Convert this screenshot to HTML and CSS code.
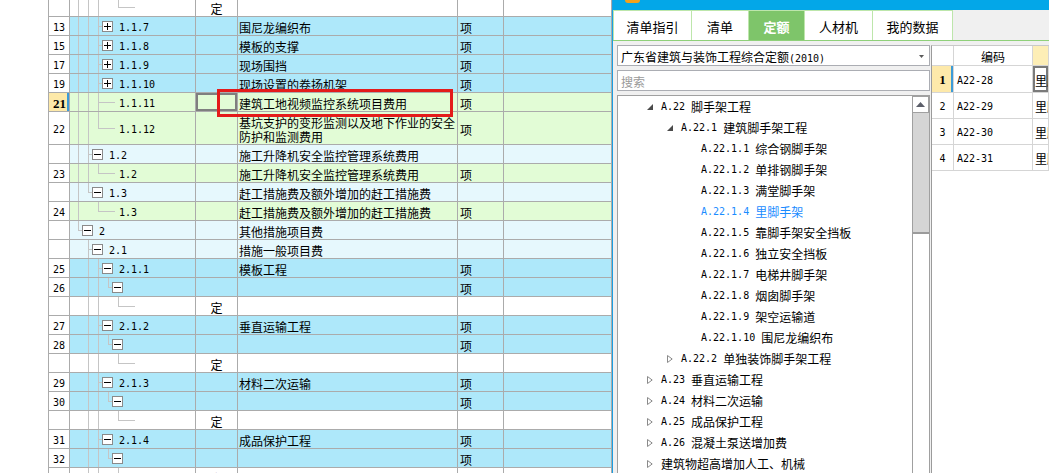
FILE: index.html
```html
<!DOCTYPE html>
<html lang="zh-CN">
<head>
    <meta charset="UTF-8">
    <title>措施项目 - 定额</title>
    <link rel="stylesheet" href="styles.css">
</head>
<body>
    <div class="sheet">
        <div class="row">
            <div class="lead"></div><div class="num"></div>
            <div class="tree"><i class="g v"></i><i class="g v"></i><i class="g v"></i><i class="g e"></i><i class="g l"></i><i class="g h"></i></div>
            <div class="kind">定</div><div class="name"></div><div class="unit"></div><div class="more"></div>
        </div>
        <div class="row blue">
            <div class="lead"></div><div class="num">13</div>
            <div class="tree"><i class="g v"></i><i class="g v"></i><i class="g t"></i><b class="box plus"></b><span class="code">1.1.7</span></div>
            <div class="kind"></div><div class="name">围尼龙编织布</div><div class="unit">项</div><div class="more"></div>
        </div>
        <div class="row blue">
            <div class="lead"></div><div class="num">15</div>
            <div class="tree"><i class="g v"></i><i class="g v"></i><i class="g t"></i><b class="box plus"></b><span class="code">1.1.8</span></div>
            <div class="kind"></div><div class="name">模板的支撑</div><div class="unit">项</div><div class="more"></div>
        </div>
        <div class="row blue">
            <div class="lead"></div><div class="num">17</div>
            <div class="tree"><i class="g v"></i><i class="g v"></i><i class="g t"></i><b class="box plus"></b><span class="code">1.1.9</span></div>
            <div class="kind"></div><div class="name">现场围挡</div><div class="unit">项</div><div class="more"></div>
        </div>
        <div class="row blue">
            <div class="lead"></div><div class="num">19</div>
            <div class="tree"><i class="g v"></i><i class="g v"></i><i class="g t"></i><b class="box plus"></b><span class="code">1.1.10</span></div>
            <div class="kind"></div><div class="name">现场设置的卷扬机架</div><div class="unit">项</div><div class="more"></div>
        </div>
        <div class="row green">
            <div class="lead"></div><div class="num sel">21</div>
            <div class="tree"><i class="g v"></i><i class="g v"></i><i class="g t"></i><i class="g h"></i><span class="code">1.1.11</span></div>
            <div class="kind focus"></div><div class="name">建筑工地视频监控系统项目费用</div><div class="unit">项</div><div class="more"></div>
        </div>
        <div class="row green tall">
            <div class="lead"></div><div class="num">22</div>
            <div class="tree"><i class="g v"></i><i class="g v"></i><i class="g l"></i><i class="g h"></i><span class="code">1.1.12</span></div>
            <div class="kind"></div><div class="name">基坑支护的变形监测以及地下作业的安全防护和监测费用</div><div class="unit">项</div><div class="more"></div>
        </div>
        <div class="row light">
            <div class="lead"></div><div class="num"></div>
            <div class="tree"><i class="g v"></i><i class="g t"></i><b class="box"></b><span class="code">1.2</span></div>
            <div class="kind"></div><div class="name">施工升降机安全监控管理系统费用</div><div class="unit"></div><div class="more"></div>
        </div>
        <div class="row green">
            <div class="lead"></div><div class="num">23</div>
            <div class="tree"><i class="g v"></i><i class="g v"></i><i class="g l"></i><i class="g h"></i><span class="code">1.2</span></div>
            <div class="kind"></div><div class="name">施工升降机安全监控管理系统费用</div><div class="unit">项</div><div class="more"></div>
        </div>
        <div class="row light">
            <div class="lead"></div><div class="num"></div>
            <div class="tree"><i class="g v"></i><i class="g l"></i><b class="box"></b><span class="code">1.3</span></div>
            <div class="kind"></div><div class="name">赶工措施费及额外增加的赶工措施费</div><div class="unit"></div><div class="more"></div>
        </div>
        <div class="row green">
            <div class="lead"></div><div class="num">24</div>
            <div class="tree"><i class="g v"></i><i class="g e"></i><i class="g l"></i><i class="g h"></i><span class="code">1.3</span></div>
            <div class="kind"></div><div class="name">赶工措施费及额外增加的赶工措施费</div><div class="unit">项</div><div class="more"></div>
        </div>
        <div class="row light">
            <div class="lead"></div><div class="num"></div>
            <div class="tree"><i class="g l"></i><b class="box"></b><span class="code">2</span></div>
            <div class="kind"></div><div class="name">其他措施项目费</div><div class="unit"></div><div class="more"></div>
        </div>
        <div class="row light">
            <div class="lead"></div><div class="num"></div>
            <div class="tree"><i class="g e"></i><i class="g t"></i><b class="box"></b><span class="code">2.1</span></div>
            <div class="kind"></div><div class="name">措施一般项目费</div><div class="unit"></div><div class="more"></div>
        </div>
        <div class="row blue">
            <div class="lead"></div><div class="num">25</div>
            <div class="tree"><i class="g e"></i><i class="g v"></i><i class="g t"></i><b class="box"></b><span class="code">2.1.1</span></div>
            <div class="kind"></div><div class="name">模板工程</div><div class="unit">项</div><div class="more"></div>
        </div>
        <div class="row blue">
            <div class="lead"></div><div class="num">26</div>
            <div class="tree"><i class="g e"></i><i class="g v"></i><i class="g v"></i><i class="g l"></i><b class="box"></b></div>
            <div class="kind"></div><div class="name"></div><div class="unit">项</div><div class="more"></div>
        </div>
        <div class="row">
            <div class="lead"></div><div class="num"></div>
            <div class="tree"><i class="g e"></i><i class="g v"></i><i class="g v"></i><i class="g e"></i><i class="g l"></i><i class="g h"></i></div>
            <div class="kind">定</div><div class="name"></div><div class="unit"></div><div class="more"></div>
        </div>
        <div class="row blue">
            <div class="lead"></div><div class="num">27</div>
            <div class="tree"><i class="g e"></i><i class="g v"></i><i class="g t"></i><b class="box"></b><span class="code">2.1.2</span></div>
            <div class="kind"></div><div class="name">垂直运输工程</div><div class="unit">项</div><div class="more"></div>
        </div>
        <div class="row blue">
            <div class="lead"></div><div class="num">28</div>
            <div class="tree"><i class="g e"></i><i class="g v"></i><i class="g v"></i><i class="g l"></i><b class="box"></b></div>
            <div class="kind"></div><div class="name"></div><div class="unit">项</div><div class="more"></div>
        </div>
        <div class="row">
            <div class="lead"></div><div class="num"></div>
            <div class="tree"><i class="g e"></i><i class="g v"></i><i class="g v"></i><i class="g e"></i><i class="g l"></i><i class="g h"></i></div>
            <div class="kind">定</div><div class="name"></div><div class="unit"></div><div class="more"></div>
        </div>
        <div class="row blue">
            <div class="lead"></div><div class="num">29</div>
            <div class="tree"><i class="g e"></i><i class="g v"></i><i class="g t"></i><b class="box"></b><span class="code">2.1.3</span></div>
            <div class="kind"></div><div class="name">材料二次运输</div><div class="unit">项</div><div class="more"></div>
        </div>
        <div class="row blue">
            <div class="lead"></div><div class="num">30</div>
            <div class="tree"><i class="g e"></i><i class="g v"></i><i class="g v"></i><i class="g l"></i><b class="box"></b></div>
            <div class="kind"></div><div class="name"></div><div class="unit">项</div><div class="more"></div>
        </div>
        <div class="row">
            <div class="lead"></div><div class="num"></div>
            <div class="tree"><i class="g e"></i><i class="g v"></i><i class="g v"></i><i class="g e"></i><i class="g l"></i><i class="g h"></i></div>
            <div class="kind">定</div><div class="name"></div><div class="unit"></div><div class="more"></div>
        </div>
        <div class="row blue">
            <div class="lead"></div><div class="num">31</div>
            <div class="tree"><i class="g e"></i><i class="g v"></i><i class="g t"></i><b class="box"></b><span class="code">2.1.4</span></div>
            <div class="kind"></div><div class="name">成品保护工程</div><div class="unit">项</div><div class="more"></div>
        </div>
        <div class="row blue">
            <div class="lead"></div><div class="num">32</div>
            <div class="tree"><i class="g e"></i><i class="g v"></i><i class="g v"></i><i class="g l"></i><b class="box"></b></div>
            <div class="kind"></div><div class="name"></div><div class="unit">项</div><div class="more"></div>
        </div>
        <div class="row">
            <div class="lead"></div><div class="num"></div>
            <div class="tree"><i class="g e"></i><i class="g v"></i><i class="g v"></i><i class="g e"></i><i class="g l"></i><i class="g h"></i></div>
            <div class="kind">定</div><div class="name"></div><div class="unit"></div><div class="more"></div>
        </div>

        <div class="mark"></div>
    </div>

    <div class="side">
        <div class="titlebar"><span class="logo"></span></div>
        <div class="tabs">
            <div class="tab">清单指引</div>
            <div class="tab">清单</div>
            <div class="tab on">定额</div>
            <div class="tab">人材机</div>
            <div class="tab">我的数据</div>
        </div>
        <div class="panes">
            <div class="finder">
                <div class="select">
                    <span>广东省建筑与装饰工程综合定额<span class="code">(2010)</span></span>
                    <svg width="5" height="3" viewBox="0 0 5 3"><polygon points="0,0 5,0 2.5,3" fill="#5a5a5a"/></svg>
                </div>
                <div class="search">搜索</div>
                <div class="treebox">
                    <div class="list">
                        <div class="item lv0"><span class="ico"><svg width="6" height="6" viewBox="0 0 6 6"><polygon points="6,0 6,6 0,6" fill="#4b4b4b"/></svg></span><span class="code">A.22</span>脚手架工程</div>
                        <div class="item lv1"><span class="ico"><svg width="6" height="6" viewBox="0 0 6 6"><polygon points="6,0 6,6 0,6" fill="#4b4b4b"/></svg></span><span class="code">A.22.1</span>建筑脚手架工程</div>
                        <div class="item lv2"><span class="code">A.22.1.1</span>综合钢脚手架</div>
                        <div class="item lv2"><span class="code">A.22.1.2</span>单排钢脚手架</div>
                        <div class="item lv2"><span class="code">A.22.1.3</span>满堂脚手架</div>
                        <div class="item lv2 cur"><span class="code">A.22.1.4</span>里脚手架</div>
                        <div class="item lv2"><span class="code">A.22.1.5</span>靠脚手架安全挡板</div>
                        <div class="item lv2"><span class="code">A.22.1.6</span>独立安全挡板</div>
                        <div class="item lv2"><span class="code">A.22.1.7</span>电梯井脚手架</div>
                        <div class="item lv2"><span class="code">A.22.1.8</span>烟囱脚手架</div>
                        <div class="item lv2"><span class="code">A.22.1.9</span>架空运输道</div>
                        <div class="item lv2"><span class="code">A.22.1.10</span>围尼龙编织布</div>
                        <div class="item lv1"><span class="ico"><svg width="6" height="8" viewBox="0 0 6 8"><polygon points="0.5,0.5 5.2,4 0.5,7.5" fill="none" stroke="#8a8a8a"/></svg></span><span class="code">A.22.2</span>单独装饰脚手架工程</div>
                        <div class="item lv0"><span class="ico"><svg width="6" height="8" viewBox="0 0 6 8"><polygon points="0.5,0.5 5.2,4 0.5,7.5" fill="none" stroke="#8a8a8a"/></svg></span><span class="code">A.23</span>垂直运输工程</div>
                        <div class="item lv0"><span class="ico"><svg width="6" height="8" viewBox="0 0 6 8"><polygon points="0.5,0.5 5.2,4 0.5,7.5" fill="none" stroke="#8a8a8a"/></svg></span><span class="code">A.24</span>材料二次运输</div>
                        <div class="item lv0"><span class="ico"><svg width="6" height="8" viewBox="0 0 6 8"><polygon points="0.5,0.5 5.2,4 0.5,7.5" fill="none" stroke="#8a8a8a"/></svg></span><span class="code">A.25</span>成品保护工程</div>
                        <div class="item lv0"><span class="ico"><svg width="6" height="8" viewBox="0 0 6 8"><polygon points="0.5,0.5 5.2,4 0.5,7.5" fill="none" stroke="#8a8a8a"/></svg></span><span class="code">A.26</span>混凝土泵送增加费</div>
                        <div class="item lv0"><span class="ico"><svg width="6" height="8" viewBox="0 0 6 8"><polygon points="0.5,0.5 5.2,4 0.5,7.5" fill="none" stroke="#8a8a8a"/></svg></span>建筑物超高增加人工、机械</div>
                    </div>
                    <div class="scroll">
                        <div class="up"><svg width="9" height="5" viewBox="0 0 9 5"><polygon points="0,5 9,5 4.5,0" fill="#5c5f6a"/></svg></div>
                        <div class="thumb"></div>
                    </div>
                </div>
            </div>
            <div class="table">
                <div class="trow head"><div class="tn"></div><div class="tc">编码</div><div class="tx hl"></div></div>
                <div class="trow first"><div class="tn sel">1</div><div class="tc code">A22-28</div><div class="tx focus">里脚手架</div></div>
                <div class="trow"><div class="tn code">2</div><div class="tc code">A22-29</div><div class="tx">里脚手架</div></div>
                <div class="trow"><div class="tn code">3</div><div class="tc code">A22-30</div><div class="tx">里脚手架</div></div>
                <div class="trow"><div class="tn code">4</div><div class="tc code">A22-31</div><div class="tx">里脚手架</div></div>
            </div>
        </div>
    </div>
</body>
</html>
```

FILE: styles.css
```css
* {
    margin: 0;
    padding: 0;
    box-sizing: border-box;
}

html, body {
    width: 100%;
    height: 100%;
}

body {
    font-family: "Noto Sans CJK SC", sans-serif;
    font-size: 12px;
    color: #000;
    background: #fff;
    display: flex;
    overflow: hidden;
}

.code {
    font-family: "DejaVu Sans Mono", monospace;
    font-size: 10px;
}

/* left sheet */
.sheet {
    width: 612px;
    flex: none;
    position: relative;
    margin-top: -2px;
}

.row {
    display: grid;
    grid-template-columns: 49px 21px 126px 42px 220px 46px 108px;
    height: 19px;
}

.row.tall {
    height: 33px;
}

.row > div {
    display: flex;
    align-items: center;
    padding-top: 4px;
    line-height: 14px;
    white-space: nowrap;
    overflow: hidden;
    border-right: 1px solid #ababab;
    border-bottom: 1px solid #ababab;
}

.row > .lead {
    border-bottom: none;
}

.num {
    padding-left: 4px;
    font-family: "DejaVu Sans Mono", monospace;
    font-size: 10px;
}

.num.sel {
    background: #fde9a9;
    font-family: "Liberation Serif", serif;
    font-size: 13px;
    font-weight: bold;
    box-shadow: inset -2px 0 #3d9bd8;
}

.kind {
    justify-content: center;
}

.kind.focus {
    box-shadow: inset 0 0 0 2px #7f7f7f;
}

.name {
    padding-left: 1px;
}

.row.tall .name {
    white-space: normal;
}

.unit {
    padding-left: 2px;
}

.blue > :nth-child(n+3) {
    background-color: #aee8fa;
}

.green > :nth-child(n+3) {
    background-color: #e2fcd6;
}

.light > :nth-child(n+3) {
    background-color: #e6f8fd;
}

.row > .tree {
    padding: 0 0 0 3px;
    align-items: stretch;
}

.tree .code {
    align-self: center;
    padding-top: 4px;
    margin-left: 6px;
}

.tree .h + .code {
    margin-left: 4px;
}

.g {
    flex: none;
    width: 10px;
    background-repeat: no-repeat;
}

.g.v {
    background-image: linear-gradient(#c5c5c5, #c5c5c5);
    background-size: 1px 100%;
    background-position: 5px 0;
}

.g.t {
    background-image: linear-gradient(#c5c5c5, #c5c5c5), linear-gradient(#c5c5c5, #c5c5c5);
    background-size: 1px 100%, 5px 1px;
    background-position: 5px 0, 5px 50%;
}

.g.l {
    background-image: linear-gradient(#c5c5c5, #c5c5c5), linear-gradient(#c5c5c5, #c5c5c5);
    background-size: 1px 50%, 5px 1px;
    background-position: 5px 0, 5px 50%;
}

.g.h {
    width: 12px;
    background-image: linear-gradient(#c5c5c5, #c5c5c5);
    background-size: 100% 1px;
    background-position: 0 50%;
}

.box {
    flex: none;
    align-self: center;
    width: 11px;
    height: 11px;
    margin-left: -1px;
    border: 1px solid #8a8a8a;
    background: linear-gradient(#000, #000) center / 7px 1px no-repeat #fff;
}

.box.plus {
    background-image: linear-gradient(#000, #000), linear-gradient(#000, #000);
    background-size: 7px 1px, 1px 7px;
}

.mark {
    position: absolute;
    left: 217px;
    top: 91px;
    width: 236px;
    height: 28px;
    border: 3px solid #e41b1b;
}

/* right side panel */
.side {
    flex: 1;
    min-width: 0;
    display: flex;
    flex-direction: column;
    border-left: 1px solid #1b9ee2;
    background: #f0f0f0;
}

.titlebar {
    flex: none;
    height: 10px;
    background: #03a7e8;
}

.logo {
    display: block;
    width: 15px;
    height: 3px;
    margin-left: 12px;
    border-radius: 0 0 4px 4px;
    background: #f4a11c;
}

.tabs {
    flex: none;
    display: flex;
    height: 31px;
    border-bottom: 1px solid #8fd07a;
}

.tab {
    display: flex;
    align-items: center;
    justify-content: center;
    padding-top: 2px;
    font-size: 13px;
    background: #fff;
    border-top: 1px solid #bde6ab;
    border-right: 1px solid #bde6ab;
}

.tab:nth-child(1) { width: 79px; border-left: 1px solid #bde6ab; }
.tab:nth-child(2) { width: 57px; }
.tab:nth-child(3) { width: 56px; }
.tab:nth-child(4) { width: 68px; }
.tab:nth-child(5) { width: 80px; }

.tab.on {
    background: #7ec56a;
    color: #fff;
    font-weight: bold;
}

.panes {
    flex: 1;
    min-height: 0;
    display: flex;
}

.finder {
    flex: none;
    width: 317px;
    display: flex;
    flex-direction: column;
    gap: 4px;
    padding: 4px 0 0 4px;
}

.select, .search {
    flex: none;
    height: 21px;
    display: flex;
    align-items: center;
    padding: 1px 0 0 3px;
    background: #fff;
    border: 1px solid #abadb3;
    white-space: nowrap;
}

.select {
    justify-content: space-between;
    padding-right: 5px;
}

.search {
    color: #9a9a9a;
}

.treebox {
    flex: 1;
    min-height: 0;
    display: flex;
    background: #fff;
    border: 1px solid #a0a0a0;
    border-bottom: none;
}

.list {
    flex: 1;
    overflow: hidden;
}

.item {
    height: 21px;
    display: flex;
    align-items: center;
    white-space: nowrap;
}

.item .code {
    margin-right: 6px;
}

.item.cur {
    color: #1a8cff;
}

.lv0 { padding-left: 29px; }
.lv1 { padding-left: 49px; }
.lv2 { padding-left: 83px; }

.ico {
    flex: none;
    width: 14px;
    display: flex;
    align-items: center;
}

.scroll {
    flex: none;
    width: 17px;
    display: flex;
    flex-direction: column;
    border-left: 1px solid #a0a0a0;
}

.up {
    height: 17px;
    display: flex;
    align-items: center;
    justify-content: center;
    border: 1px solid #a0a0a0;
    border-left: none;
    background: #fff;
}

.thumb {
    height: 121px;
    background: #d5d5d5;
    border-bottom: 2px solid #9b9b9b;
}

.table {
    flex: 1;
    min-width: 0;
    margin: 4px 0 0 1px;
    overflow: hidden;
    background: #fff;
    border-left: 1px solid #9b9b9b;
    border-top: 1px solid #c9c9c9;
}

.trow {
    display: grid;
    grid-template-columns: 22px 79px 1fr;
    height: 26px;
}

.trow.head {
    height: 20px;
}

.trow.first {
    height: 27px;
}

.trow > div {
    display: flex;
    align-items: center;
    padding-top: 2px;
    white-space: nowrap;
    overflow: hidden;
    border-right: 1px solid #d5d5d5;
    border-bottom: 1px solid #d5d5d5;
}

.tn {
    justify-content: center;
}

.tc {
    padding-left: 3px;
}

.head .tc {
    justify-content: center;
    padding-left: 0;
}

.tx {
    padding-left: 2px;
}

.hl {
    background: #fdeeb6;
}

.tn.sel {
    background: #fde9aa;
    font-family: "Liberation Serif", serif;
    font-size: 13px;
    font-weight: bold;
    box-shadow: inset -2px 0 #3d9bd8;
}

.tx.focus {
    box-shadow: inset 0 0 0 2px #7a7a7a;
}
```
